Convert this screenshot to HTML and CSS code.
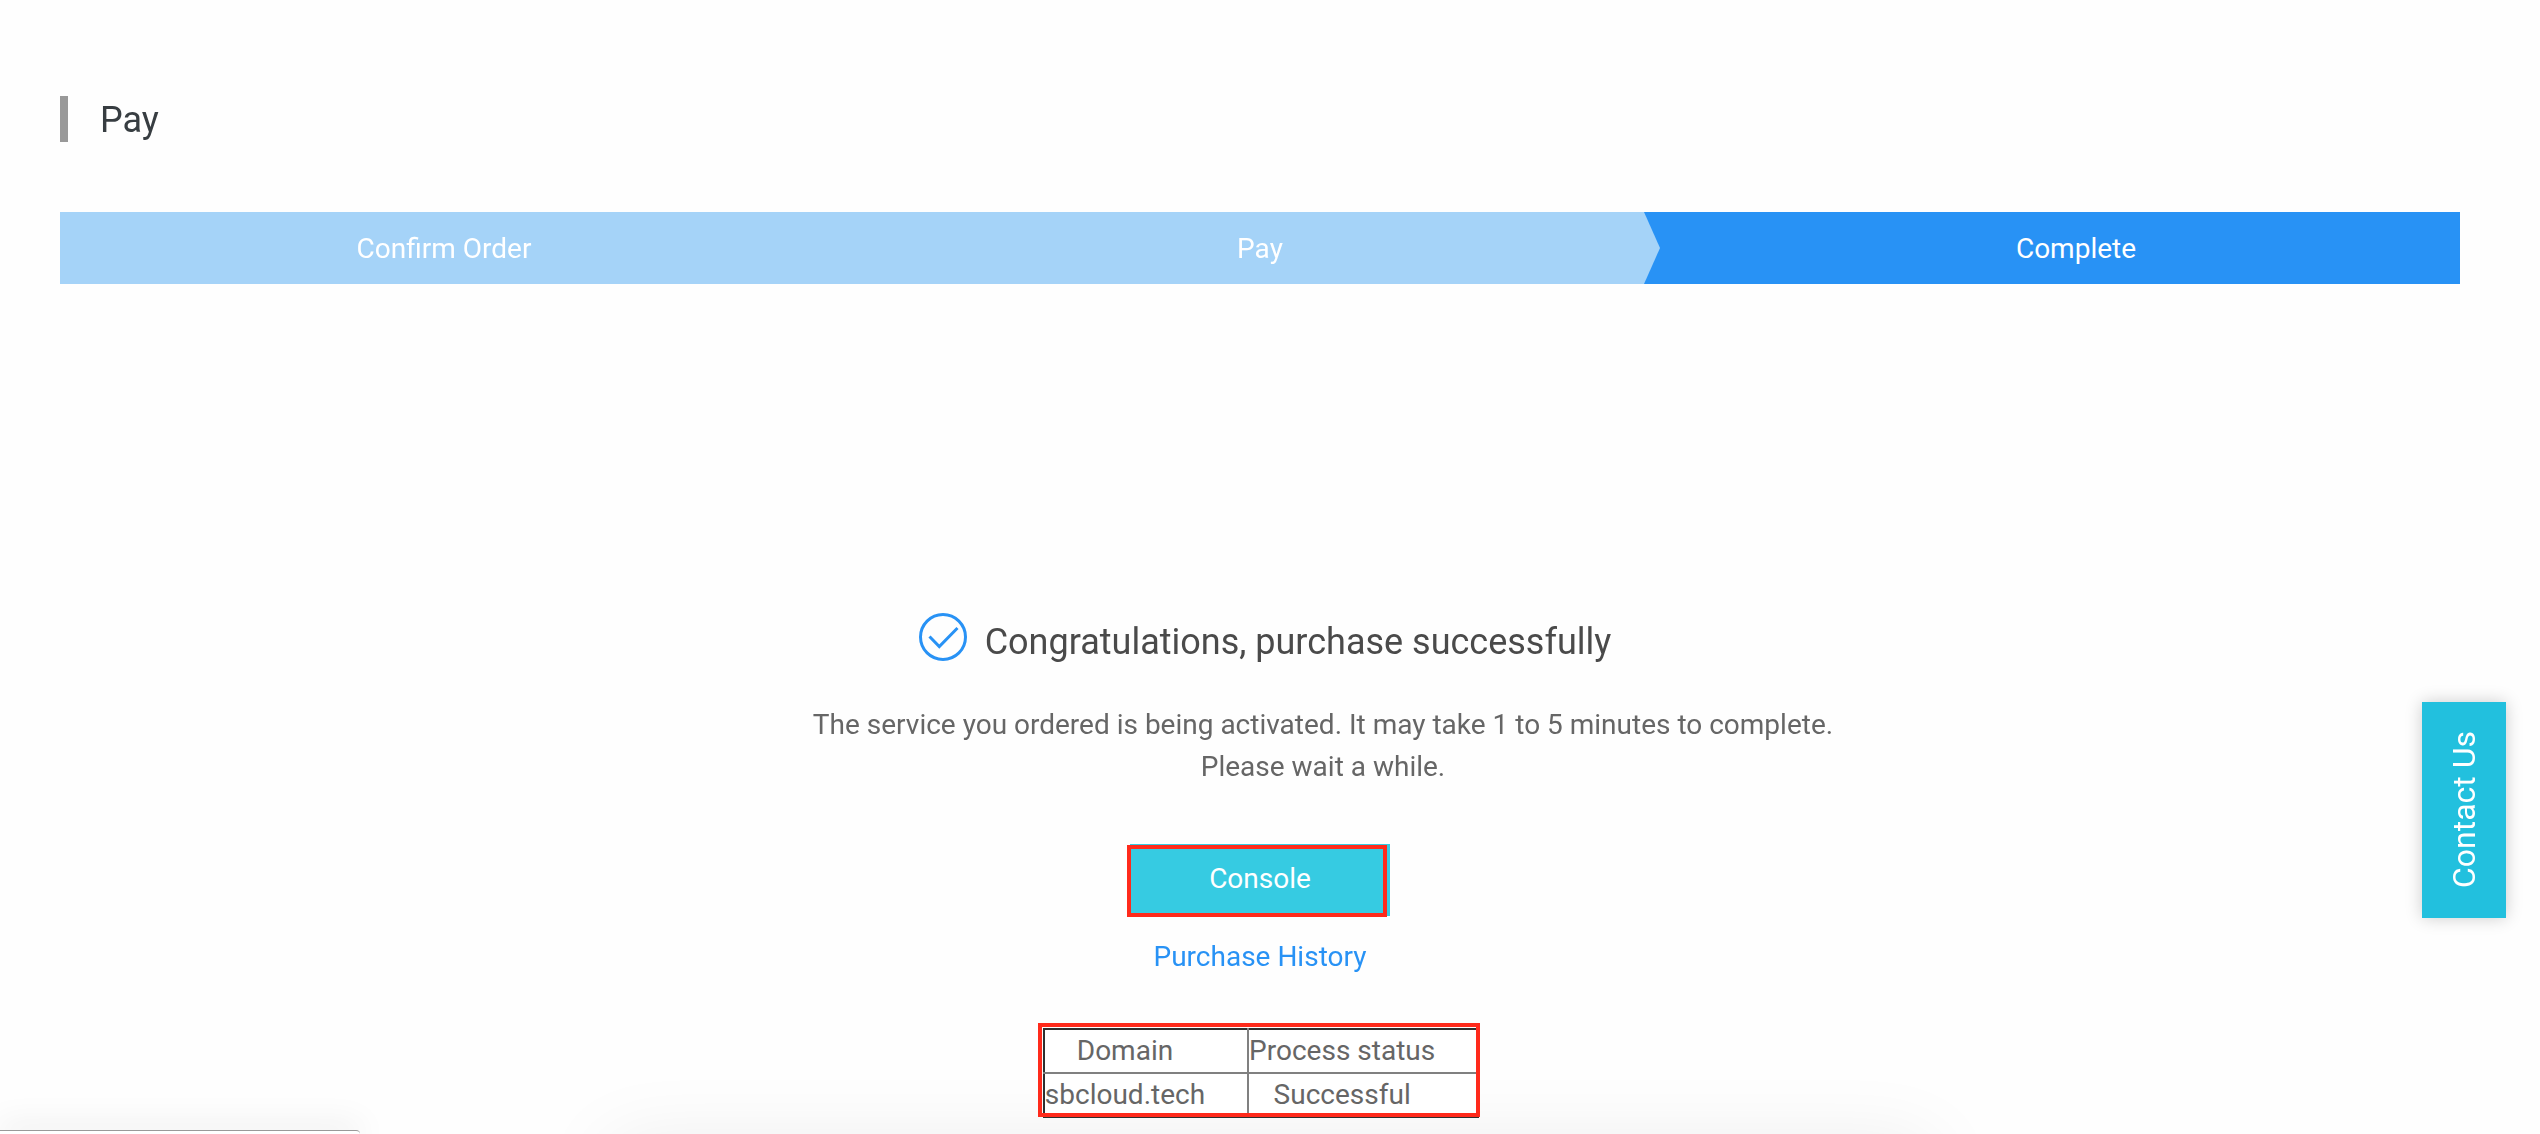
FILE: index.html
```
<!DOCTYPE html>
<html lang="en">
<head>
<meta charset="utf-8">
<meta name="viewport" content="width=device-width, initial-scale=1">
<title>Pay</title>
<link rel="stylesheet" href="styles.css">
</head>
<body>
<main class="page">
  <h1 class="page-title">Pay</h1>
  <ol class="steps">
    <li class="step">Confirm Order</li>
    <li class="step step-before-current">Pay</li>
    <li class="step step-current" aria-current="step">Complete</li>
  </ol>
  <section class="result">
    <div class="result-heading">
      <svg class="result-icon" viewBox="0 0 48 48" aria-hidden="true">
        <circle cx="24" cy="24" r="22.5"/>
        <path d="M10.500 23.500 20.300 33.500 38.500 15"/>
      </svg>
      <h2 class="result-title">Congratulations, purchase successfully</h2>
    </div>
    <p class="result-text">The service you ordered is being activated. It may take 1 to 5 minutes to complete.<br>Please wait a while.</p>
    <div class="console-mark">
      <button class="console-button" type="button">Console</button>
    </div>
    <a class="history-link" href="#history">Purchase History</a>
    <div class="table-mark">
      <table class="status-table">
        <tr><th scope="col">Domain</th><th scope="col">Process status</th></tr>
        <tr><td>sbcloud.tech</td><td>Successful</td></tr>
      </table>
    </div>
  </section>
</main>
<button class="contact" type="button"><span class="contact-label">Contact Us</span></button>
<div class="bottom-shade"></div>
<div class="status-bubble"></div>
</body>
</html>
```
FILE: styles.css
```
* { box-sizing: border-box; }

body {
  margin: 0;
  min-height: 100vh;
  overflow: hidden;
  background: #fefefe;
  color: #666;
  font-family: Roboto, "Liberation Sans", sans-serif;
  font-size: 28px;
  line-height: 42px;
}

.page { padding: 96px 80px 0 60px; }

.page-title {
  margin: 0 0 70px;
  padding: 2px 0 0 32px;
  border-left: 8px solid #999;
  color: #373d41;
  font-size: 36px;
  font-weight: 400;
  line-height: 44px;
}

.steps {
  display: grid;
  grid-template-columns: 32% 34% 34%;
  margin: 0;
  padding: 0;
  list-style: none;
  color: #fff;
  line-height: 70px;
  text-align: center;
}

.step {
  padding-top: 2px;
  background: #a5d3f8;
}

.step-before-current { padding-left: 48px; }

.step-current {
  position: relative;
  padding-left: 48px;
  background: #2892f5;
}

.step-current::before {
  content: "";
  position: absolute;
  top: 0;
  left: 0;
  width: 16px;
  height: 100%;
  background: #a5d3f8;
  clip-path: polygon(0 0, 100% 50%, 0 100%);
}

.result {
  display: flex;
  flex-direction: column;
  align-items: center;
  padding-top: 329px;
}

.result-heading {
  display: flex;
  align-items: flex-start;
  gap: 18px;
  padding-left: 10px;
}

.result-icon {
  width: 48px;
  height: 48px;
  fill: none;
  stroke: #2892f5;
  stroke-width: 3;
}

.result-title {
  margin: 0;
  color: #4a4a4a;
  font-size: 36px;
  font-weight: 400;
  line-height: 58px;
}

.result-text {
  margin: 33px 0 56px;
  padding-left: 126px;
  text-align: center;
}

.console-mark, .table-mark { position: relative; }
.table-mark { margin-left: 2px; }

.console-mark::after, .table-mark::after {
  content: "";
  position: absolute;
  border: 4px solid #ff2a1b;
  pointer-events: none;
}

.console-mark::after { inset: 1px 3px -1px -3px; }
.table-mark::after { inset: -5px -1px 1px -5px; }

.console-button {
  display: block;
  width: 260px;
  height: 72px;
  padding: 0 0 2px;
  border: 0;
  background: #36cbe2;
  color: #fff;
  font: inherit;
}

.history-link {
  margin: 20px 0 50px;
  color: #2892f5;
  text-decoration: none;
}

.status-table {
  border: 2px solid #2f2f2f;
  border-collapse: collapse;
  background: #fff;
  text-align: center;
}

.status-table th, .status-table td {
  padding: 0 42px 0 0;
  border: 2px solid #808080;
  font-weight: 400;
}

.status-table tr:first-child > * { border-top-color: #2f2f2f; }
.status-table tr:last-child > * { border-bottom-color: #2f2f2f; }
.status-table tr > :first-child { border-left-color: #2f2f2f; }

.contact {
  position: fixed;
  right: 34px;
  bottom: 216px;
  display: flex;
  align-items: center;
  justify-content: center;
  width: 84px;
  height: 216px;
  padding: 0;
  border: 0;
  background: #22c0de;
  box-shadow: 0 0 16px rgba(0, 0, 0, 0.2);
  color: #fff;
  font: inherit;
  font-size: 32px;
}

.contact-label {
  writing-mode: vertical-rl;
  transform: rotate(180deg);
}

/* Soft shadow of the panel below the fold */
.bottom-shade {
  position: fixed;
  z-index: -1;
  top: 100%;
  left: 24%;
  right: 24%;
  height: 80px;
  box-shadow: 0 10px 80px rgba(0, 0, 0, 0.08);
}

.status-bubble {
  position: fixed;
  bottom: 0;
  left: 0;
  width: 360px;
  height: 4px;
  border-top: 1px solid #999;
  border-top-right-radius: 4px;
  background: #fff;
  box-shadow: 0 0 32px rgba(0, 0, 0, 0.3);
}
```
